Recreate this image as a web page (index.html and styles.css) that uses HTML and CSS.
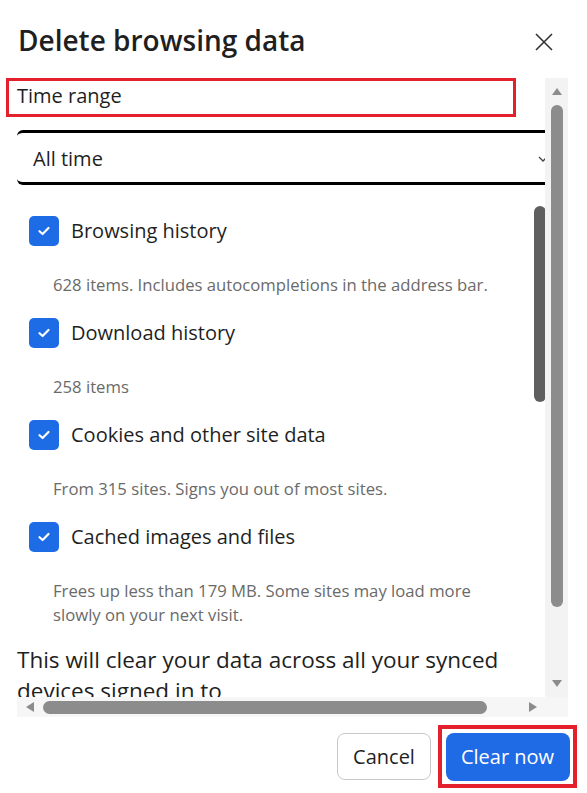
FILE: index.html
```html
<!DOCTYPE html>
<html lang="en">
<head>
<meta charset="utf-8">
<title>Delete browsing data</title>
<link rel="stylesheet" href="styles.css">
</head>
<body>
<div class="dialog">
  <header class="head">
    <h1 class="title">Delete browsing data</h1>
    <button class="close" aria-label="Close">
      <svg width="18" height="18" viewBox="0 0 18 18"><path d="M1 1L17 17M17 1L1 17" stroke="#333" stroke-width="1.6" fill="none"/></svg>
    </button>
  </header>

  <div class="scroller">
    <div class="viewport">
      <div class="content">
        <div class="range-label">Time range</div>
        <div class="select">
          <span class="select-value">All time</span>
          <svg class="chev" width="10" height="8" viewBox="0 0 10 8"><path d="M1 2L5 6L9 2" stroke="#444" stroke-width="1.3" fill="none"/></svg>
        </div>

        <div class="list">
          <div class="items">
            <div class="item">
              <div class="row"><span class="cb"><svg width="14" height="12" viewBox="0 0 14 12"><path d="M2.5 6.2L5.6 9L11.5 3" stroke="#fff" stroke-width="2.2" fill="none" stroke-linecap="round" stroke-linejoin="round"/></svg></span><span class="label">Browsing history</span></div>
              <p class="desc">628 items. Includes autocompletions in the address bar.</p>
            </div>
            <div class="item">
              <div class="row"><span class="cb"><svg width="14" height="12" viewBox="0 0 14 12"><path d="M2.5 6.2L5.6 9L11.5 3" stroke="#fff" stroke-width="2.2" fill="none" stroke-linecap="round" stroke-linejoin="round"/></svg></span><span class="label">Download history</span></div>
              <p class="desc">258 items</p>
            </div>
            <div class="item">
              <div class="row"><span class="cb"><svg width="14" height="12" viewBox="0 0 14 12"><path d="M2.5 6.2L5.6 9L11.5 3" stroke="#fff" stroke-width="2.2" fill="none" stroke-linecap="round" stroke-linejoin="round"/></svg></span><span class="label">Cookies and other site data</span></div>
              <p class="desc">From 315 sites. Signs you out of most sites.</p>
            </div>
            <div class="item">
              <div class="row"><span class="cb"><svg width="14" height="12" viewBox="0 0 14 12"><path d="M2.5 6.2L5.6 9L11.5 3" stroke="#fff" stroke-width="2.2" fill="none" stroke-linecap="round" stroke-linejoin="round"/></svg></span><span class="label">Cached images and files</span></div>
              <p class="desc">Frees up less than 179 MB. Some sites may load more<br>slowly on your next visit.</p>
            </div>
          </div>
          <div class="inner-bar"><div class="inner-thumb"></div></div>
        </div>

        <p class="sync">This will clear your data across all your synced devices signed in to</p>
      </div>
    </div>

    <div class="vbar">
      <span class="arrow-up"></span>
      <span class="vthumb"></span>
      <span class="spacer"></span>
      <span class="arrow-down"></span>
    </div>
    <div class="hbar">
      <span class="arrow-left"></span>
      <span class="hthumb"></span>
      <span class="spacer"></span>
      <span class="arrow-right"></span>
    </div>
    <div class="corner"></div>
  </div>

  <footer class="foot">
    <button class="btn cancel">Cancel</button>
    <span class="highlight"><button class="btn primary">Clear now</button></span>
  </footer>
</div>
</body>
</html>
```

FILE: styles.css
```css
* { box-sizing: border-box; }
html, body { margin: 0; padding: 0; background: #fff; }
body {
  font-family: "Open Sans", "Noto Sans", sans-serif;
  color: #1f1f1f;
  width: 587px;
  height: 793px;
  overflow: hidden;
}
.dialog { display: flex; flex-direction: column; }

.head {
  display: flex;
  justify-content: space-between;
  align-items: flex-start;
  padding: 21px 34px 0 18px;
  margin-bottom: 19px;
}
.title {
  margin: 0;
  font-size: 28px;
  font-weight: 600;
  line-height: 38px;
  color: #1f1f1f;
}
.close {
  margin-top: 12px;
  padding: 0;
  border: 0;
  background: none;
  width: 18px;
  height: 18px;
  display: block;
}
.close svg { display: block; }

.scroller {
  margin-left: 6px;
  width: 562px;
  display: grid;
  grid-template-columns: 539px 23px;
  grid-template-rows: 619px 20px;
}
.viewport {
  overflow: hidden;
  padding-left: 11px;
}
.content { width: 535px; }

.range-label {
  margin-left: -11px;
  width: 510px;
  height: 39px;
  border: 3px solid #e3202b;
  padding: 1px 0 0 8px;
  font-size: 20px;
  line-height: 28px;
  color: #1f1f1f;
}

.select {
  margin-top: 13px;
  height: 55px;
  border-top: 3px solid #000;
  border-bottom: 3px solid #000;
  border-radius: 6px 0 0 6px;
  display: flex;
  align-items: center;
  justify-content: space-between;
  padding: 2px 4px 0 16px;
}
.select-value { font-size: 20px; color: #1f1f1f; }

.list {
  margin-top: 15px;
  display: grid;
  grid-template-columns: 1fr 12px;
  padding-right: 6px;
}
.items { padding: 16px 0 5px 12px; display: flex; flex-direction: column; gap: 21px; }
.row { display: flex; align-items: center; height: 30px; gap: 12px; }
.cb {
  width: 30px;
  height: 30px;
  border-radius: 5px;
  background: #1e6be6;
  display: flex;
  align-items: center;
  justify-content: center;
  flex: none;
}
.cb svg { display: block; }
.label { font-size: 20px; line-height: 30px; color: #1f1f1f; }
.desc {
  margin: 27px 0 0 24px;
  font-size: 16.7px;
  line-height: 24px;
  color: #6a6a6a;
  white-space: nowrap;
}
.inner-bar { padding-top: 6px; }
.inner-thumb { width: 12px; height: 196px; border-radius: 6px; background: #5f5f5f; }

.sync {
  margin: 12px 0 0;
  font-size: 22.5px;
  line-height: 31px;
  color: #1f1f1f;
  width: 520px;
}

.vbar {
  background: #f3f3f3;
  display: flex;
  flex-direction: column;
  align-items: center;
  padding: 10px 0 10px;
}
.arrow-up, .arrow-down {
  width: 0; height: 0;
  border-left: 5.5px solid transparent;
  border-right: 5.5px solid transparent;
}
.arrow-up { border-bottom: 7px solid #8c8c8c; }
.arrow-down { border-top: 7px solid #8c8c8c; }
.vthumb {
  margin-top: 10px;
  width: 12px;
  height: 502px;
  border-radius: 6px;
  background: #8c8c8c;
}
.spacer { flex: 1; }

.hbar {
  margin-left: 11px;
  background: #f6f6f6;
  display: flex;
  align-items: center;
  padding: 0 8px 0 9px;
}
.arrow-left, .arrow-right {
  width: 0; height: 0;
  border-top: 5px solid transparent;
  border-bottom: 5px solid transparent;
}
.arrow-left { border-right: 8px solid #8c8c8c; }
.arrow-right { border-left: 8px solid #8c8c8c; }
.hthumb {
  margin-left: 9px;
  width: 444px;
  height: 13px;
  border-radius: 6.5px;
  background: #8c8c8c;
}
.corner { background: #f6f6f6; }

.foot {
  margin-top: 8px;
  display: flex;
  justify-content: flex-end;
  align-items: center;
  gap: 7px;
  padding-right: 10px;
}
.btn {
  font-family: "Open Sans", "Noto Sans", sans-serif;
  border-radius: 8px;
  cursor: pointer;
}
.cancel {
  width: 94px;
  height: 47px;
  background: #fff;
  border: 1px solid #c9c9c9;
  font-size: 20px;
  color: #1f1f1f;
}
.highlight {
  display: block;
  border: 4px solid #e3202b;
  padding: 3.5px;
}
.primary {
  display: block;
  width: 124px;
  height: 48px;
  border: 0;
  background: #1f6be6;
  color: #fff;
  font-size: 20px;
}
```
